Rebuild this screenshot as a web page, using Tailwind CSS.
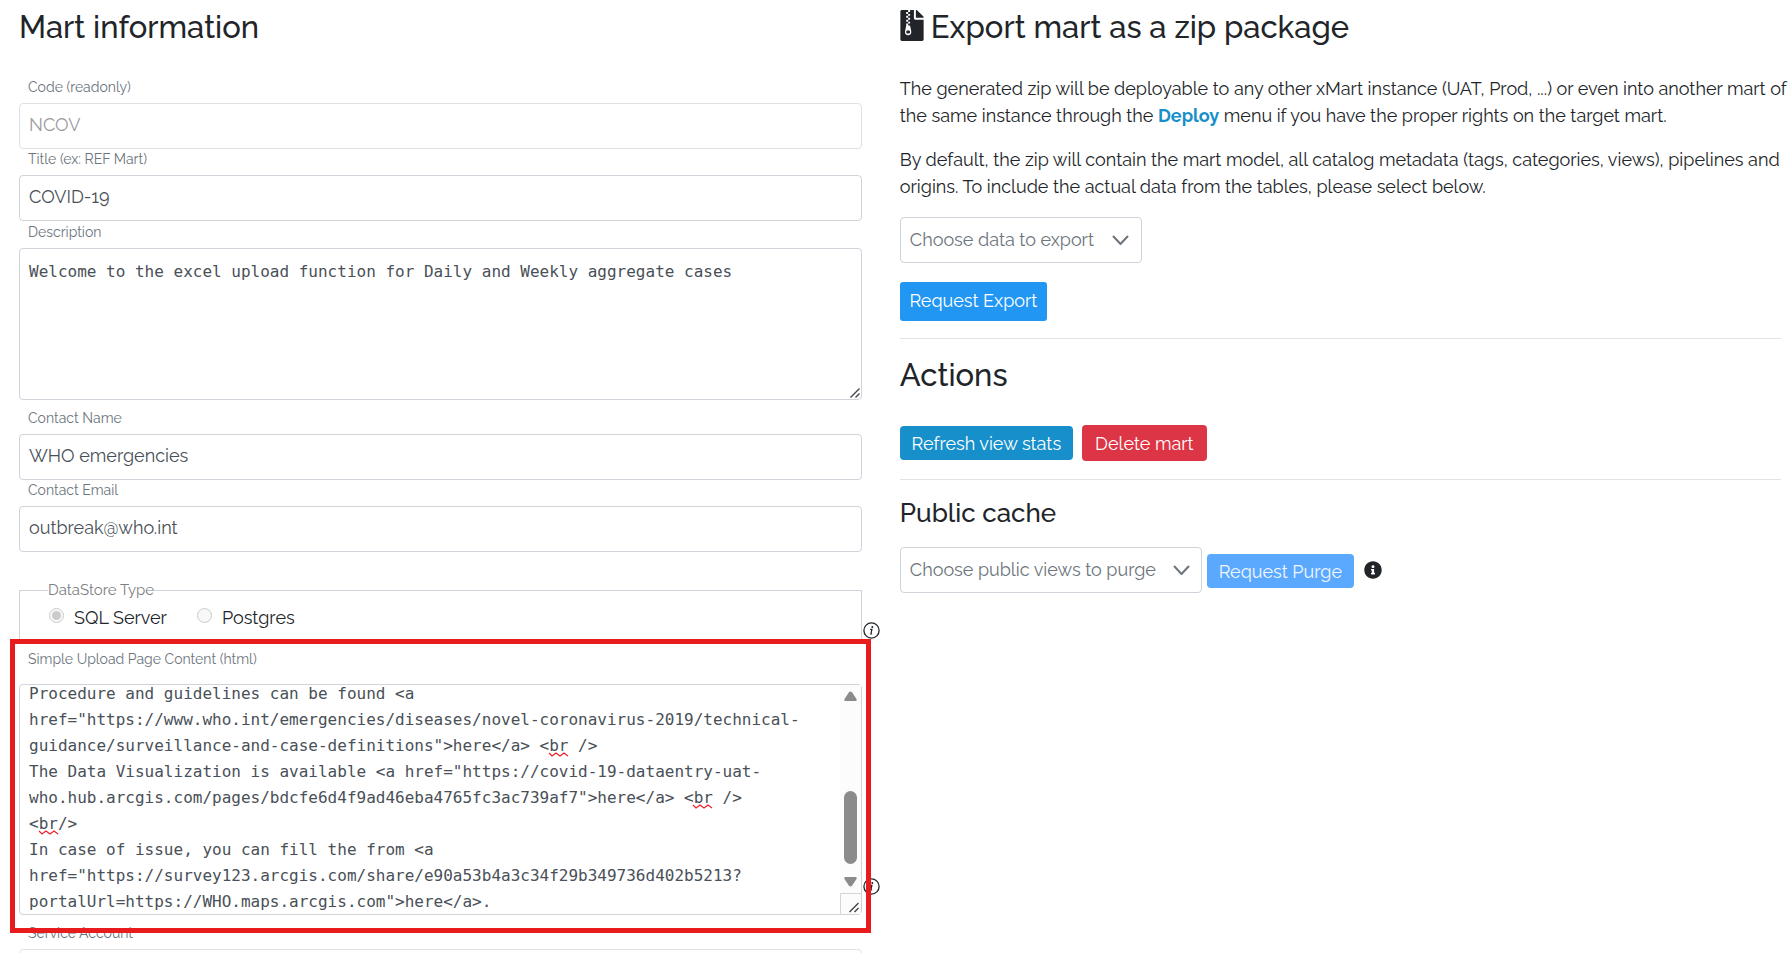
<!DOCTYPE html>
<html lang="en">
<head>
<meta charset="utf-8">
<meta name="viewport" content="width=device-width, initial-scale=1">
<title>Mart information</title>
<script src="https://cdn.jsdelivr.net/npm/@tailwindcss/browser@4"></script>
</head>
<body class="h-screen overflow-hidden bg-white font-[Raleway,'Open_Sans',sans-serif] text-[18px] leading-[26px] text-[#212529]">
<div class="grid grid-cols-[22fr_23fr] gap-[38px] pl-[19px] pr-[11px]">

  <!-- Mart information form -->
  <form>
    <h2 class="pt-[8px] text-[31px] font-medium leading-[38px]">Mart information</h2>
    <div class="mt-[31px]">
      <label for="code" class="block pb-[6px] pl-[9px] text-[14px] leading-[20px] text-[#6c757d]">Code (readonly)</label>
      <input id="code" type="text" value="NCOV" readonly class="block h-[46px] w-full rounded-[4px] border border-[#dee2e6] px-[9px] pb-[3px] text-[#999c9f]">
    </div>
    <div>
      <label for="title" class="block pb-[6px] pl-[9px] text-[14px] leading-[20px] text-[#6c757d]">Title (ex: REF Mart)</label>
      <input id="title" type="text" value="COVID-19" class="block h-[46px] w-full rounded-[4px] border border-[#ced4da] px-[9px] pb-[3px] text-[#495057]">
    </div>
    <div>
      <label for="description" class="block pb-[6px] pl-[9px] pt-px text-[14px] leading-[20px] text-[#6c757d]">Description</label>
      <div class="relative">
        <textarea id="description" spellcheck="false" class="block h-[152px] w-full resize-none rounded-[4px] border border-[#ced4da] px-[9px] py-[10px] font-['DejaVu_Sans_Mono',monospace] text-[16px] leading-[26px] text-[#495057]">Welcome to the excel upload function for Daily and Weekly aggregate cases</textarea>
        <svg class="pointer-events-none absolute bottom-[2px] right-[2px] size-[10px]" viewBox="0 0 10 10" fill="none" stroke="#444" stroke-width="1.4" aria-hidden="true"><path d="M0.500 9.500l9-9M5.500 9.500l4-4"/></svg>
      </div>
    </div>
    <div class="mt-[8px]">
      <label for="contact-name" class="block pb-[6px] pl-[9px] text-[14px] leading-[20px] text-[#6c757d]">Contact Name</label>
      <input id="contact-name" type="text" value="WHO emergencies" class="block h-[46px] w-full rounded-[4px] border border-[#ced4da] px-[9px] pb-[3px] text-[#495057]">
    </div>
    <div>
      <label for="contact-email" class="block pb-[6px] pl-[9px] text-[14px] leading-[20px] text-[#6c757d]">Contact Email</label>
      <input id="contact-email" type="email" value="outbreak@who.int" class="block h-[46px] w-full rounded-[4px] border border-[#ced4da] px-[9px] pb-[3px] text-[#495057]">
    </div>

    <div class="relative mt-[28px]">
      <fieldset class="h-[61px] border border-[#ced4da] pl-[28px]">
        <legend class="text-[15px] leading-[20px] text-[#808080]">DataStore Type</legend>
        <div class="flex gap-[30px] pl-px pt-[5px]">
          <label class="flex items-center gap-[10px]">
            <input type="radio" name="datastore" checked disabled class="mb-[5px] grid size-[15px] appearance-none place-items-center rounded-full border border-[#cbcbcb] bg-[#f8f8f8] before:size-[9px] before:rounded-full before:bg-[#cbcbcb]">SQL Server
          </label>
          <label class="flex items-center gap-[10px]">
            <input type="radio" name="datastore" disabled class="mb-[5px] size-[15px] appearance-none rounded-full border border-[#cbcbcb] bg-[#f8f8f8]">Postgres
          </label>
        </div>
      </fieldset>
      <svg class="absolute left-full top-[42px] ml-px size-[17px]" viewBox="0 0 17 17" fill="none" stroke="#212529" role="img" aria-label="Info">
        <circle cx="8.5" cy="8.5" r="7.6" stroke-width="1.3"/>
        <circle cx="9.3" cy="4.9" r="1" fill="#212529" stroke="none"/>
        <path d="M7.2 7.4h1.7l-1 4.6h1.3" stroke-width="1.2"/>
      </svg>
    </div>

    <div class="relative mt-[8px]">
      <label for="upload-content" class="block pb-[15px] pl-[9px] text-[14px] leading-[20px] text-[#6c757d]">Simple Upload Page Content (html)</label>
      <div class="relative">
        <textarea id="upload-content" spellcheck="false" class="block h-[231px] w-full resize-none overflow-hidden whitespace-pre rounded-[4px] border border-[#ced4da] px-[9px] font-['DejaVu_Sans_Mono',monospace] text-[16px] leading-[26px] text-[#495057]">Procedure and guidelines can be found &lt;a
href="https://www.who.int/emergencies/diseases/novel-coronavirus-2019/technical-
guidance/surveillance-and-case-definitions"&gt;here&lt;/a&gt; &lt;br /&gt;
The Data Visualization is available &lt;a href="https://covid-19-dataentry-uat-
who.hub.arcgis.com/pages/bdcfe6d4f9ad46eba4765fc3ac739af7"&gt;here&lt;/a&gt; &lt;br /&gt;
&lt;br/&gt;
In case of issue, you can fill the from &lt;a
href="https://survey123.arcgis.com/share/e90a53b4a3c34f29b349736d402b5213?
portalUrl=https://WHO.maps.arcgis.com"&gt;here&lt;/a&gt;.</textarea>
        <!-- Spelling marks -->
        <svg class="pointer-events-none absolute inset-0 h-full w-full" fill="none" stroke="#f3202a" stroke-width="1.2" aria-hidden="true">
          <path d="M530 69l3 3 4-3 4 3 4-3 4 3"/>
          <path d="M674 121l3 3 4-3 4 3 4-3 4 3"/>
          <path d="M20 147l3 3 4-3 4 3 4-3 4 3"/>
        </svg>
        <!-- Scrollbar and resize grip -->
        <svg class="pointer-events-none absolute bottom-px right-px top-px w-[21px]" viewBox="0 0 21 229" aria-hidden="true">
          <path d="M0 0h21v229H0z" fill="#fcfcfc"/>
          <path d="M10.500 6.500q1 0 1.700 1l4.300 6.500q.7 2-1 2h-10q-1.700 0-1-2l4.300-6.500q.7-1 1.700-1zM10.500 201.500q1 0 1.700-1l4.300-6.500q.7-2-1-2h-10q-1.700 0-1 2l4.300 6.500q.7 1 1.700 1z" fill="#8b8b8b"/>
          <rect x="4" y="106" width="13" height="73" rx="6.500" fill="#8b8b8b"/>
          <path d="M0.500 229V208.500H21" fill="none" stroke="#d5d5d5"/>
          <path d="M9.500 227l9-9M14.500 227l4-4" fill="none" stroke="#444" stroke-width="1.400"/>
        </svg>
      </div>
      <svg class="absolute bottom-[20px] left-full ml-px size-[17px]" viewBox="0 0 17 17" fill="none" stroke="#212529" role="img" aria-label="Info">
        <circle cx="8.500" cy="8.500" r="7.600" stroke-width="1.300"/>
        <circle cx="9.300" cy="4.900" r="1" fill="#212529" stroke="none"/>
        <path d="M7.200 7.400h1.700l-1 4.600h1.300" stroke-width="1.200"/>
      </svg>
      <!-- Highlight frame -->
      <div class="pointer-events-none absolute -bottom-[18px] -left-[9px] -right-[9px] -top-[10px] z-10 border-[5px] border-[#e81c1c]"></div>
    </div>

    <div class="mt-[8px]">
      <label for="service-account" class="block pb-[6px] pl-[9px] text-[14px] leading-[20px] text-[#6c757d]">Service Account</label>
      <input id="service-account" type="text" readonly class="block h-[46px] w-full rounded-[4px] border border-[#dee2e6] px-[9px]">
    </div>
  </form>

  <!-- Export, actions and cache -->
  <div>
    <h2 class="flex gap-[7px] pt-[8px] text-[31px] font-medium leading-[38px]">
      <svg class="mt-[2px] h-[31px] w-[24px]" viewBox="0 0 384 512" fill="#212529" aria-hidden="true"><path d="M377 105L279.100 7c-4.500-4.500-10.600-7-17-7H256v128h128v-6.100c0-6.300-2.500-12.400-7-16.900zM128.400 336c-17.900 0-32.400 12.100-32.400 27 0 15 14.600 27 32.500 27s32.400-12.100 32.400-27-14.600-27-32.500-27zM224 136V0h-63.600v32h-32V0H24C10.700 0 0 10.700 0 24v464c0 13.300 10.700 24 24 24h336c13.300 0 24-10.700 24-24V160H248c-13.200 0-24-10.800-24-24zM95.900 32h32v32h-32zm32.300 384c-33.200 0-58-30.400-51.400-62.900L96.400 256v-32h32v-32h-32v-32h32v-32h-32V96h32V64h32v32h-32v32h32v32h-32v32h32v32h-32v32h22.100c5.700 0 10.700 4.100 11.800 9.700l17.300 87.700c6.400 32.400-18.400 62.600-51.400 62.600z"/></svg>
      Export mart as a zip package
    </h2>
    <p class="-mr-[11px] mt-[29px] leading-[27px]">The generated zip will be deployable to any other xMart instance (UAT, Prod, ...) or even into another mart of the same instance through the <a href="#deploy" class="font-bold text-[#178fca]">Deploy</a> menu if you have the proper rights on the target mart.</p>
    <p class="-mr-[11px] mt-[17px] leading-[27px]">By default, the zip will contain the mart model, all catalog metadata (tags, categories, views), pipelines and origins. To include the actual data from the tables, please select below.</p>

    <div class="relative mt-[17px] w-[242px]">
      <select aria-label="Choose data to export" class="block h-[46px] w-full appearance-none rounded-[4px] border border-[#ced4da] bg-white pl-[9px] text-[#6c757d]"><option>Choose data to export</option></select>
      <svg class="pointer-events-none absolute right-[13px] top-[18px] h-[11px] w-[17px]" viewBox="0 0 17 11" fill="none" stroke="#6c757d" stroke-width="2" stroke-linecap="round" stroke-linejoin="round" aria-hidden="true"><path d="M1.500 1.500l7 7.500 7-7.500"/></svg>
    </div>
    <button type="button" class="mt-[19px] block h-[39px] w-[147px] rounded-[3px] bg-[#2196f3] pb-[2px] text-white">Request Export</button>
    <hr class="mt-[17px] border-[#e2e3e4]">

    <h2 class="mt-[17px] text-[31px] font-medium leading-[38px]">Actions</h2>
    <div class="mt-[31px] flex items-center gap-[9px]">
      <button type="button" class="h-[34px] w-[173px] rounded-[4px] bg-[#178fca] pt-[2px] text-white">Refresh view stats</button>
      <button type="button" class="h-[36px] w-[125px] rounded-[4px] bg-[#dc3545] pt-[2px] text-white">Delete mart</button>
    </div>
    <hr class="mt-[18px] border-[#e2e3e4]">

    <h3 class="mt-[17px] text-[26px] font-medium leading-[32px]">Public cache</h3>
    <div class="mt-[18px] flex items-center">
      <div class="relative w-[302px]">
        <select aria-label="Choose public views to purge" class="block h-[46px] w-full appearance-none rounded-[4px] border border-[#ced4da] bg-white pl-[9px] text-[#6c757d]"><option>Choose public views to purge</option></select>
        <svg class="pointer-events-none absolute right-[12px] top-[18px] h-[11px] w-[17px]" viewBox="0 0 17 11" fill="none" stroke="#6c757d" stroke-width="2" stroke-linecap="round" stroke-linejoin="round" aria-hidden="true"><path d="M1.500 1.500l7 7.500 7-7.500"/></svg>
      </div>
      <button type="button" disabled class="ml-[5px] mt-[2px] h-[34px] w-[147px] rounded-[4px] bg-[#5ba8ff] pt-[2px] text-[#f0f7ff]">Request Purge</button>
      <svg class="ml-[10px] size-[18px]" viewBox="0 0 512 512" fill="#212529" role="img" aria-label="Info"><path d="M256 8C119 8 8 119.100 8 256c0 137 111 248 248 248s248-111 248-248C504 119.100 393 8 256 8zm0 110c23.200 0 42 18.800 42 42s-18.800 42-42 42-42-18.800-42-42 18.800-42 42-42zm56 254c0 6.600-5.400 12-12 12h-88c-6.600 0-12-5.400-12-12v-24c0-6.600 5.400-12 12-12h12v-64h-12c-6.600 0-12-5.400-12-12v-24c0-6.600 5.400-12 12-12h64c6.600 0 12 5.400 12 12v100h12c6.600 0 12 5.400 12 12z"/></svg>
    </div>
  </div>
</div>
<script>
  // Scroll into the first line of the upload page content
  document.getElementById('upload-content').scrollTop = 4;
</script>
</body>
</html>
